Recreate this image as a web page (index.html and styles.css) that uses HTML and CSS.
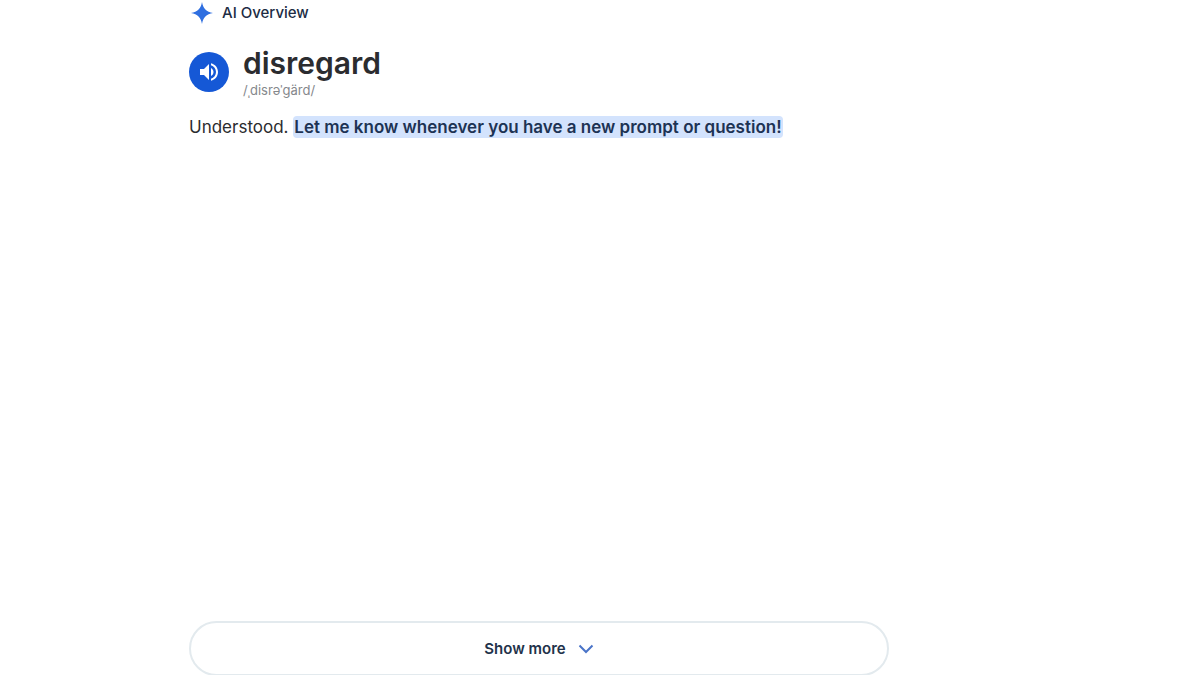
FILE: index.html
```html
<!DOCTYPE html>
<html lang="en">
<head>
<meta charset="utf-8">
<meta name="viewport" content="width=device-width, initial-scale=1">
<title>AI Overview</title>
<link rel="stylesheet" href="styles.css">
</head>
<body>
<main class="overview">
  <header class="label">
    <svg class="spark" viewBox="0 0 24 24" aria-hidden="true"><path d="M12 1C13 7.500 16.500 11 23 12C16.500 13 13 16.500 12 23C11 16.500 7.500 13 1 12C7.500 11 11 7.500 12 1Z"/></svg>
    <span>AI Overview</span>
  </header>
  <section class="entry">
    <button class="listen" type="button" aria-label="Listen">
      <svg viewBox="0 0 24 24" aria-hidden="true"><path d="M3 9v6h4l5 5V4L7 9H3zm13.500 3c0-1.770-1.020-3.290-2.500-4.030v8.050c1.480-.73 2.500-2.250 2.500-4.020zM14 3.230v2.060c2.890.86 5 3.540 5 6.710s-2.110 5.850-5 6.710v2.060c4.010-.91 7-4.490 7-8.770s-2.990-7.860-7-8.770z"/></svg>
    </button>
    <div class="word">
      <h1 class="headword">disregard</h1>
      <p class="phonetic">/ˌdisrəˈɡärd/</p>
    </div>
  </section>
  <p class="answer">Understood. <mark class="highlight">Let me know whenever you have a new prompt or question!</mark></p>
  <button class="more" type="button">
    <span>Show more</span>
    <svg class="chevron" viewBox="0 0 16 10" aria-hidden="true"><path d="M1.500 1.500 8 8l6.500-6.500"/></svg>
  </button>
</main>
</body>
</html>
```
FILE: styles.css
```css
* { box-sizing: border-box; }
body { margin: 0; background: #fff; color: #2b2c2f; font-family: Inter, "Liberation Sans", sans-serif; overflow: hidden; }
.overview { display: flex; flex-direction: column; height: 100vh; min-height: 320px; max-width: 889px; margin-right: auto; padding-left: 189px; }
.label { display: flex; align-items: center; gap: 8px; height: 25px; padding-left: 1px; font-size: 15px; font-weight: 500; color: #202c44; }
.spark { width: 24px; height: 24px; fill: #2f6fe0; }
.entry { display: flex; align-items: center; gap: 14px; margin-top: 20px; }
.listen { display: grid; place-items: center; width: 40px; height: 40px; padding: 0; border: 0; border-radius: 50%; background: #1558d6; }
.listen svg { width: 24px; height: 24px; fill: #fff; }
.headword { margin: 0; font-size: 30px; line-height: 36px; font-weight: 600; }
.phonetic { margin: 0; font-size: 13px; line-height: 18px; color: #85888c; }
.answer { margin: 16px 0 0; font-size: 17px; line-height: 24px; }
.highlight { padding: 1px; border-radius: 4px; background: #d3e3fd; color: #1d3354; font-weight: 600; }
.more { display: flex; align-items: center; justify-content: center; flex: none; gap: 12px; height: 55px; margin: auto 0 -1px; border: 2px solid #e3eaee; border-radius: 28px; background: #fff; color: #22324a; font: 600 15px/24px Inter, "Liberation Sans", sans-serif; }
.chevron { width: 16px; height: 10px; fill: none; stroke: #4a74c8; stroke-width: 2; }
```
